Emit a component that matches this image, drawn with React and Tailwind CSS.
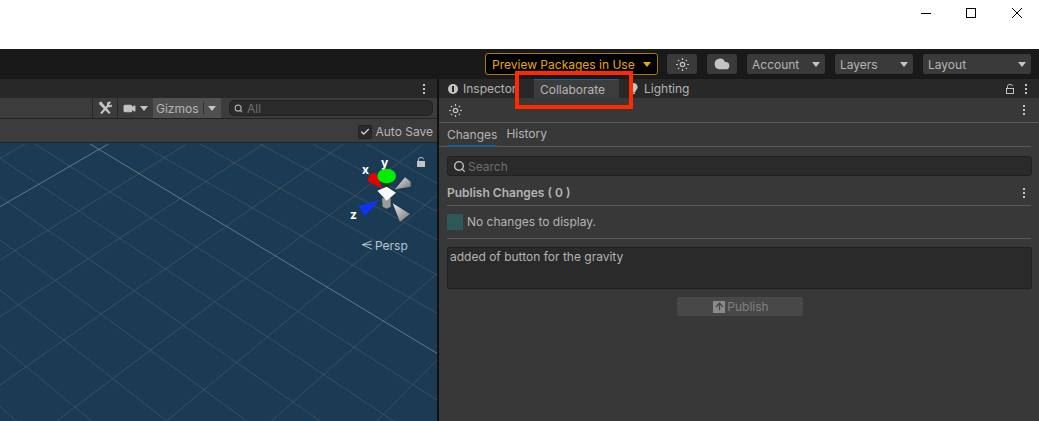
import { Search, Video, Cloud, Check, ArrowUp } from "lucide-react";

const font = { fontFamily: "Inter, 'Noto Sans', sans-serif" };

// grid lines of the scene view, traced from the screenshot at 3x
const rows = [
  [105, 12, 1311, 780],
  [0, 55, 1180, 843],
  [0, 170, 960, 843],
  [0, 300, 740, 843],
  [0, 450, 500, 843],
  [0, 615, 275, 843],
  [0, 800, 50, 843],
  [420, 12, 1311, 520],
  [600, 12, 1311, 405],
  [780, 12, 1311, 300],
  [940, 12, 1311, 215],
  [1100, 12, 1311, 130],
];
const cols = [
  [0, 55, 75, 12],
  [0, 360, 560, 12],
  [0, 530, 790, 12],
  [0, 735, 1030, 12],
  [170, 843, 1270, 12],
  [500, 843, 1311, 165],
  [815, 843, 1311, 400],
  [1130, 843, 1311, 660],
];

function Caret({ className = "" }) {
  return (
    <svg width="8" height="5" viewBox="0 0 8 5" className={className}>
      <path d="M0 0h8L4 5z" fill="#c4c4c4" />
    </svg>
  );
}

function Dots({ className = "" }) {
  return (
    <div className={`flex flex-col gap-[2px] ${className}`}>
      <span className="w-[2px] h-[2px] bg-[#c4c4c4]" />
      <span className="w-[2px] h-[2px] bg-[#c4c4c4]" />
      <span className="w-[2px] h-[2px] bg-[#c4c4c4]" />
    </div>
  );
}

function Sun() {
  return (
    <svg width="13" height="13" viewBox="0 0 13 13" fill="none" stroke="#c4c4c4">
      <circle cx="6.5" cy="6.5" r="2.2" strokeWidth="1.2" />
      <path d="M6.5 0v2M6.5 11v2M0 6.5h2M11 6.5h2M2 2l1.2 1.2M9.8 9.8L11 11M2 11l1.2-1.2M9.8 3.2L11 2" strokeWidth="1.2" />
    </svg>
  );
}

function Tools() {
  return (
    <svg width="14" height="14" viewBox="0 0 14 14" fill="none" stroke="#c4c4c4">
      <path d="M3 12.5L11 3.5" strokeWidth="2" />
      <path d="M1 1.500l2-1 9.500 11-1.500 1.500L1.500 3.500z" fill="#c4c4c4" stroke="none" />
      <path d="M9 1.500l3-1 1 1-2 2 1 1 2-1v2l-3 1-2-2z" fill="#c4c4c4" stroke="none" />
    </svg>
  );
}

function OpenLock({ fill = false }) {
  return (
    <svg width="8" height="10" viewBox="0 0 8 10" fill="none" stroke="#c4c4c4">
      <path d="M1.500 4.500V2.200C1.500 1 2.500.5 4 .5s2.500.5 2.500 1.700" />
      <rect x=".5" y="4.500" width="7" height="5" fill={fill ? "#c4c4c4" : "none"} />
    </svg>
  );
}

function Dropdown({ label, width }) {
  return (
    <div className={`h-5 ${width} bg-[#3a3a3a] rounded-[2px] flex items-center justify-between pl-[5px] pr-[5px] text-[12px] text-[#b4b4b4]`}>
      <span className="pt-px">{label}</span>
      <Caret />
    </div>
  );
}

function SceneGrid() {
  return (
    <svg viewBox="0 9 1311 834" className="w-full h-full block">
      <defs>
        <linearGradient id="cone" x1="0" y1="0" x2="1" y2="1">
          <stop offset="0" stopColor="#eeeeee" />
          <stop offset="1" stopColor="#707070" />
        </linearGradient>
      </defs>
      <g stroke="#485660" strokeWidth="2.2">
        {rows.concat(cols).map((l, i) => (
          <line key={i} x1={l[0]} y1={l[1]} x2={l[2]} y2={l[3]} />
        ))}
      </g>
      <g stroke="#75808a" strokeWidth="2.6">
        <line x1="270" y1="12" x2="1311" y2="640" />
        <line x1="0" y1="200" x2="325" y2="12" />
      </g>
      {/* axis gizmo */}
      <path d="M1147 146L1104 124Q1102 100 1128 98z" fill="#e80000" />
      <polygon points="1143,122 1177,122 1160,152" fill="#0c3a1c" />
      <ellipse cx="1160" cy="108" rx="28" ry="22" fill="#00ee00" />
      <polygon points="1185,148 1215,112 1232,125 1232,140" fill="url(#cone)" />
      <polygon points="1146,175 1172,175 1172,200 1160,206 1148,200" fill="#9a9a9a" />
      <polygon points="1132,152 1160,140 1188,158 1160,182" fill="#f6f8fc" />
      <polygon points="1138,180 1075,198 1095,228" fill="#0a35f5" />
      <polygon points="1178,190 1230,222 1200,245" fill="url(#cone)" />
      <path d="M1115 303L1087 314L1115 327M1087 314H1115" fill="none" stroke="#b8c4ce" strokeWidth="3" />
    </svg>
  );
}

export default function App() {
  return (
    <div style={font} className="relative w-[1039px] h-[421px] overflow-hidden bg-white flex flex-col">
      {/* window caption */}
      <div className="h-[49px] shrink-0 bg-white flex justify-end items-start">
        <div className="flex items-center h-[26px] pr-[17px]">
          <span className="w-[10px] h-px bg-black mr-[35px]" />
          <span className="w-[10px] h-[10px] border border-black mr-[36px]" />
          <svg width="10" height="10" viewBox="0 0 10 10" stroke="black"><path d="M0 0l10 10M10 0L0 10" /></svg>
        </div>
      </div>

      {/* main toolbar */}
      <div className="h-[30px] shrink-0 bg-[#191919] flex items-center justify-end pr-[8px]">
        <div className="h-[22px] w-[173px] mr-[9px] rounded-[3px] border border-[#a37a14] bg-black flex items-center justify-between pl-[6px] pr-[6px] text-[12px] text-[#eba700]">
          <span className="pt-px">Preview Packages in Use</span>
          <svg width="8" height="5" viewBox="0 0 8 5"><path d="M0 0h8L4 5z" fill="#eba700" /></svg>
        </div>
        <div className="w-[30px] h-5 bg-[#3a3a3a] rounded-[2px] flex items-center justify-center mr-[10px]"><Sun /></div>
        <div className="w-[30px] h-5 bg-[#3a3a3a] rounded-[2px] flex items-center justify-center mr-[10px]"><Cloud size={16} fill="#c4c4c4" stroke="#c4c4c4" /></div>
        <div className="mr-[10px]"><Dropdown label="Account" width="w-[78px]" /></div>
        <div className="mr-[10px]"><Dropdown label="Layers" width="w-[78px]" /></div>
        <Dropdown label="Layout" width="w-[108px]" />
      </div>

      <div className="flex-1 flex min-h-0">
        {/* scene panel */}
        <div className="w-[437px] shrink-0 flex flex-col">
          <div className="h-[19px] shrink-0 bg-[#282828] flex items-center justify-end pr-[12px]"><Dots /></div>
          <div className="h-[21px] shrink-0 bg-[#3c3c3c] border-b border-[#232323] flex items-center justify-end">
            <div className="h-full w-[26px] border-l border-r border-[#282828] flex items-center justify-center"><Tools /></div>
            <div className="h-full w-[35px] flex items-center justify-center gap-[4px]">
              <Video size={13} fill="#c4c4c4" color="#c4c4c4" />
              <Caret />
            </div>
            <div className="h-full w-[68px] bg-[#505050] flex items-center pl-[3px] text-[12px] text-[#b4b4b4]">
              <span className="pt-px">Gizmos</span>
              <span className="w-px h-[12px] bg-[#333] ml-[4px] mr-[4px]" />
              <Caret />
            </div>
            <div className="w-[8px]" />
            <div className="w-[204px] h-[16px] mr-[4px] rounded-[5px] bg-[#2a2a2a] border border-[#222] flex items-center pl-[4px] text-[12px] text-[#6e6e6e] gap-[3px]">
              <Search size={9} color="#aaa" strokeWidth={3} />
              <span className="pl-[1px] pt-px">All</span>
            </div>
          </div>
          <div className="h-[24px] shrink-0 bg-[#3c3c3c] border-b border-[#232323] flex items-center justify-end pr-[4px] gap-[3px] pt-[2px] text-[12px] text-[#b4b4b4]">
            <span className="w-[14px] h-[14px] bg-[#2a2a2a] border border-[#222] rounded-[2px] flex items-center justify-center"><Check size={10} color="#ddd" strokeWidth={3} /></span>
            <span>Auto Save</span>
          </div>
          <div className="relative flex-1 bg-[#1b3b55] min-h-0">
            <SceneGrid />
            <span className="absolute left-[417px] top-[14px]"><OpenLock fill /></span>
            <span className="absolute left-[362px] top-[18px] text-[12px] font-bold text-white">x</span>
            <span className="absolute left-[381px] top-[11px] text-[12px] font-bold text-white">y</span>
            <span className="absolute left-[350px] top-[63px] text-[12px] font-bold text-white">z</span>
            <span className="absolute left-[375px] top-[94px] text-[12px] text-[#b8c4ce]">Persp</span>
          </div>
        </div>
        <div className="w-[2px] shrink-0 bg-[#111]" />

        {/* collaborate panel */}
        <div className="flex-1 bg-[#383838] flex flex-col text-[12px] text-[#b4b4b4]">
          <div className="h-[19px] shrink-0 bg-[#282828] flex items-end relative">
            <div className="flex items-center pl-[9px] gap-[5px] h-full w-[95px]">
              <span className="w-[10px] h-[10px] rounded-full bg-[#c4c4c4] flex items-center justify-center">
                <span className="w-[2px] h-[6px] bg-[#282828]" />
              </span>
              <span className="pt-px">Inspector</span>
            </div>
            <div className="h-full w-[85px] bg-[#3c3c3c] border-t border-[#1c5f94] pl-[6px] pt-px flex items-center">Collaborate</div>
            <div className="flex items-center pl-[10px] gap-[5px] h-full">
              <svg width="9" height="11" viewBox="0 0 9 11"><path d="M4.500 0a4 4 0 0 1 2.200 7.400V9H2.300V7.400A4 4 0 0 1 4.500 0zM3 9.600h3V11H3z" fill="#c4c4c4" /></svg>
              <span className="pl-px pt-px">Lighting</span>
            </div>
            <div className="ml-auto h-full flex items-center gap-[11px] pr-[12px]">
              <OpenLock />
              <Dots />
            </div>
          </div>
          <div className="h-[25px] shrink-0 border-b border-[#5a5a5a] flex items-center justify-between pl-[10px] pr-[14px]">
            <Sun />
            <Dots />
          </div>
          <div className="h-[24px] shrink-0 mr-[8px] border-b border-[#5a5a5a] flex items-end pl-[8px] gap-[9px]">
            <span className="border-b-2 border-[#1c5f94] h-[21px] -mb-px">Changes</span>
            <span className="h-[21px]">History</span>
          </div>
          <div className="h-[20px] shrink-0 mt-[9px] ml-[8px] mr-[7px] bg-[#2a2a2a] border border-[#202020] rounded-[3px] flex items-center pl-[5px] gap-[2px] text-[#6e6e6e]">
            <Search size={13} color="#c4c4c4" strokeWidth={2.5} />
            <span className="pt-px">Search</span>
          </div>
          <div className="h-[30px] shrink-0 mx-[8px] border-b border-[#5a5a5a] flex items-center justify-between pr-[6px] pt-[5px] font-semibold">
            <span>Publish Changes ( 0 )</span>
            <Dots />
          </div>
          <div className="h-[33px] shrink-0 mx-[8px] border-b border-[#5a5a5a] flex items-center gap-[4px]">
            <span className="w-[16px] h-[16px] bg-[#2d5a58]" />
            <span>No changes to display.</span>
          </div>
          <div className="h-[42px] shrink-0 mt-[8px] ml-[8px] mr-[7px] bg-[#2a2a2a] border border-[#202020] rounded-[2px] pl-[2px] text-[#b4b4b4]">
            added of button for the gravity
          </div>
          <div className="flex justify-center mt-[8px] pl-[2px]">
            <div className="w-[126px] h-[19px] bg-[#484848] rounded-[2px] flex items-center justify-center gap-[2px] pl-[2px] text-[#808080]">
              <span className="w-[12px] h-[12px] bg-[#8a8a8a] flex items-center justify-center"><ArrowUp size={11} color="#484848" strokeWidth={3} /></span>
              <span>Publish</span>
            </div>
          </div>
        </div>
      </div>

      {/* annotation drawn over the tab */}
      <div className="absolute left-[515px] top-[71px] w-[118px] h-[38px] border-[4px] border-[#ff2a00]" />
    </div>
  );
}
